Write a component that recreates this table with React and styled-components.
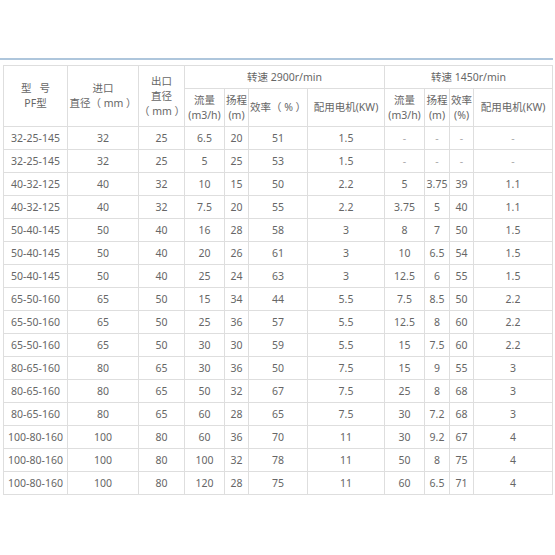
import styled, { createGlobalStyle } from "styled-components";

const GlobalStyle = createGlobalStyle`
  body {
    margin: 0;
    background: #fff;
    font-family: "Noto Sans", "Noto Sans CJK SC", sans-serif;
  }
`;

const rows = [
  ["32-25-145", "32", "25", "6.5", "20", "51", "1.5", "-", "-", "-", "-"],
  ["32-25-145", "32", "25", "5", "25", "53", "1.5", "-", "-", "-", "-"],
  ["40-32-125", "40", "32", "10", "15", "50", "2.2", "5", "3.75", "39", "1.1"],
  ["40-32-125", "40", "32", "7.5", "20", "55", "2.2", "3.75", "5", "40", "1.1"],
  ["50-40-145", "50", "40", "16", "28", "58", "3", "8", "7", "50", "1.5"],
  ["50-40-145", "50", "40", "20", "26", "61", "3", "10", "6.5", "54", "1.5"],
  ["50-40-145", "50", "40", "25", "24", "63", "3", "12.5", "6", "55", "1.5"],
  ["65-50-160", "65", "50", "15", "34", "44", "5.5", "7.5", "8.5", "50", "2.2"],
  ["65-50-160", "65", "50", "25", "36", "57", "5.5", "12.5", "8", "60", "2.2"],
  ["65-50-160", "65", "50", "30", "30", "59", "5.5", "15", "7.5", "60", "2.2"],
  ["80-65-160", "80", "65", "30", "36", "50", "7.5", "15", "9", "55", "3"],
  ["80-65-160", "80", "65", "50", "32", "67", "7.5", "25", "8", "68", "3"],
  ["80-65-160", "80", "65", "60", "28", "65", "7.5", "30", "7.2", "68", "3"],
  ["100-80-160", "100", "80", "60", "36", "70", "11", "30", "9.2", "67", "4"],
  ["100-80-160", "100", "80", "100", "32", "78", "11", "50", "8", "75", "4"],
  ["100-80-160", "100", "80", "120", "28", "75", "11", "60", "6.5", "71", "4"],
];

const widths = [64, 71, 46, 40, 24, 59, 77, 40, 25, 24, 79];

function App() {
  return (
    <>
      <GlobalStyle />
      <Page>
        <Rule />
        <Table>
          <colgroup>
            {widths.map((w, i) => (
              <col key={i} style={{ width: w }} />
            ))}
          </colgroup>
          <thead>
            <tr>
              <Th rowSpan={2}>
                型&nbsp;&nbsp;&nbsp;号
                <br />
                PF型
              </Th>
              <Th rowSpan={2}>
                进口
                <br />
                直径（ mm ）
              </Th>
              <Th rowSpan={2}>
                出口
                <br />
                直径
                <br />
                （ mm ）
              </Th>
              <Th colSpan={4} $h={23}>转速 2900r/min</Th>
              <Th colSpan={4} $h={23}>转速 1450r/min</Th>
            </tr>
            <tr>
              <Th $h={38}>
                流量
                <br />
                (m3/h)
              </Th>
              <Th>
                扬程
                <br />
                (m)
              </Th>
              <Th>效率（ % ）</Th>
              <Th>配用电机(KW)</Th>
              <Th>
                流量
                <br />
                (m3/h)
              </Th>
              <Th>
                扬程
                <br />
                (m)
              </Th>
              <Th>
                效率
                <br />
                (%)
              </Th>
              <Th>配用电机(KW)</Th>
            </tr>
          </thead>
          <tbody>
            {rows.map((r, i) => (
              <tr key={i}>
                {r.map((v, j) => (
                  <Td key={j} $dash={v === "-"}>
                    {v}
                  </Td>
                ))}
              </tr>
            ))}
          </tbody>
        </Table>
      </Page>
    </>
  );
}

export default App;

const Page = styled.div`
  padding-top: 58px;
  width: 555px;
  height: 555px;
  box-sizing: border-box;
`;
const Rule = styled.div`
  height: 2px;
  width: 553px;
  background: #aec6dc;
  margin-bottom: 5px;
`;
const Table = styled.table`
  margin-left: 3px;
  width: 549px;
  border-collapse: collapse;
  table-layout: fixed;
  color: #666;
  font-size: 10.5px;
`;
const Th = styled.th`
  font-weight: normal;
  border: 1px solid #dedede;
  padding: 0;
  text-align: center;
  vertical-align: middle;
  line-height: 15px;
  height: ${({ $h }) => ($h ? `${$h - 1}px` : "auto")};
  white-space: nowrap;
`;
const Td = styled.td`
  border: 1px solid #dedede;
  padding: 0;
  height: 22px;
  text-align: center;
  vertical-align: middle;
  white-space: nowrap;
  color: ${({ $dash }) => ($dash ? "#aaa" : "#666")};
`;
